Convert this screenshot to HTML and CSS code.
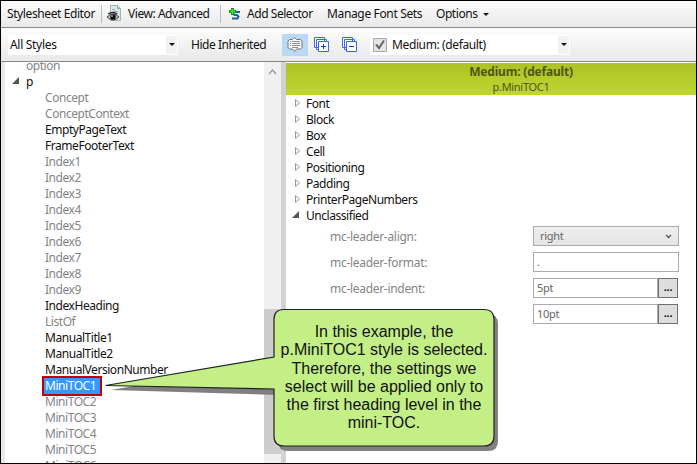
FILE: index.html
```html
<!DOCTYPE html>
<html lang="en">
<head>
<meta charset="utf-8">
<title>Stylesheet Editor</title>
<link rel="stylesheet" href="styles.css">
</head>
<body>
<div class="window">
  <header class="bar menu">
    <span class="title">Stylesheet Editor</span>
    <i class="sep"></i>
    <svg class="view-icon" width="16" height="18" viewBox="0 0 16 18"><path d="M3.500.500h7l3 3v12h-10z" fill="#dce9ea" stroke="#9db5b7"/><path d="M10.500.500v3h3M5 4.500h3M6 6.500h5M8 8.500h3" fill="none" stroke="#8fa9ab"/><path d="M0 12q6-6 12 0q-6 6-12 0" fill="#c9c9c2" stroke="#444"/><path d="M1 9q5-3 9 0" fill="none" stroke="#222" stroke-width="1.300"/><circle cx="6" cy="12" r="2.800" fill="#111"/><circle cx="5" cy="11" r=".8" fill="#fff"/></svg>
    <span class="view">View: Advanced</span>
    <i class="sep"></i>
    <svg class="add-icon" width="12" height="13" viewBox="0 0 12 13"><path d="M11 4H5.500L4.500 5.500l1 1.500H8l1.500 1.500L8.500 10.500H3" fill="none" stroke="#1668a0" stroke-width="2"/><path d="M3.500 0v7M0 3.500h7" stroke="#159718" stroke-width="3"/><path d="M3.500 1v5M1 3.500h5" stroke="#45df3c" stroke-width="1.500"/></svg>
    <span class="add">Add Selector</span>
    <span class="manage">Manage Font Sets</span>
    <span class="options">Options</span>
    <i class="arrow"></i>
  </header>
  <div class="bar tools">
    <div class="combo styles"><span class="all">All Styles</span><b class="drop"><i class="arrow"></i></b></div>
    <span class="hide">Hide Inherited</span>
    <div class="toggle"><svg width="16" height="16" viewBox="0 0 16 16"><path d="M2.500 2.500h3l2-2 2 2h4l1.500 1.500v6.500L13.500 12h-4l-2 2.500-2-2.500h-3L1 10.500V4z" fill="#f7f7f7" stroke="#777"/><path d="M3 4.500h1M5 4.500h8M3 6.500h1M5 6.500h8M3 8.500h1M5 8.500h8M5 10.500h6" stroke="#777" stroke-width=".8"/></svg></div>
    <svg class="expand" width="16" height="16" viewBox="0 0 16 16"><g fill="#fff" stroke="#3a68ea"><path d="M.5.500h10v10h-10zM2.500 2.500h10v10h-10z"/><path d="M4.500 4.500h10v10h-10z"/><path d="M7 9.500h5M9.500 7v5" stroke="#174695"/></g></svg>
    <svg class="collapse" width="16" height="16" viewBox="0 0 16 16"><g fill="#fff" stroke="#3a68ea"><path d="M.5.500h10v10h-10zM2.500 2.500h10v10h-10z"/><path d="M4.500 4.500h10v10h-10z"/><path d="M7 9.500h5" stroke="#174695"/></g></svg>
    <div class="combo medium"><svg width="14" height="14" viewBox="0 0 14 14"><path d="M.5.500h13v13H.5z" fill="#e5e5e5" stroke="#aaa"/><path d="M3 6.500l3 3.500 5-7.500" fill="none" stroke="#666" stroke-width="2"/></svg><span class="mdef">Medium: (default)</span><b class="drop"><i class="arrow"></i></b></div>
  </div>
  <main class="body">
    <div class="tree">
      <ul>
        <li class="parent gray">option</li>
        <li class="parent"><svg class="open" width="8" height="8" viewBox="0 0 8 8"><path d="M7 0v7H0z" fill="#555"/></svg>p</li>
        <li class="gray">Concept</li><li class="gray">ConceptContext</li>
        <li>EmptyPageText</li><li>FrameFooterText</li>
        <li class="gray">Index1</li><li class="gray">Index2</li><li class="gray">Index3</li><li class="gray">Index4</li><li class="gray">Index5</li><li class="gray">Index6</li><li class="gray">Index7</li><li class="gray">Index8</li><li class="gray">Index9</li>
        <li>IndexHeading</li><li class="gray">ListOf</li><li>ManualTitle1</li><li>ManualTitle2</li><li>ManualVersionNumber</li>
        <li class="picked"><span>MiniTOC1</span></li>
        <li class="gray">MiniTOC2</li><li class="gray">MiniTOC3</li><li class="gray">MiniTOC4</li><li class="gray">MiniTOC5</li><li class="gray">MiniTOC6</li>
      </ul>
    </div>
    <div class="scroll"><svg width="9" height="6" viewBox="0 0 9 6"><path d="M1 5l3.500-4L8 5" fill="none" stroke="#999" stroke-width="1.300"/></svg><i class="thumb"></i></div>
    <div class="split"></div>
    <section class="props">
      <div class="heading"><strong>Medium: (default)</strong><span>p.MiniTOC1</span></div>
      <ul class="groups">
        <li><svg width="6" height="8" viewBox="0 0 6 8"><path d="M.5.500v7L4.500 4z" fill="#fff" stroke="#999"/></svg>Font</li>
        <li><svg width="6" height="8" viewBox="0 0 6 8"><path d="M.5.500v7L4.500 4z" fill="#fff" stroke="#999"/></svg>Block</li>
        <li><svg width="6" height="8" viewBox="0 0 6 8"><path d="M.5.500v7L4.500 4z" fill="#fff" stroke="#999"/></svg>Box</li>
        <li><svg width="6" height="8" viewBox="0 0 6 8"><path d="M.5.500v7L4.500 4z" fill="#fff" stroke="#999"/></svg>Cell</li>
        <li><svg width="6" height="8" viewBox="0 0 6 8"><path d="M.5.500v7L4.500 4z" fill="#fff" stroke="#999"/></svg>Positioning</li>
        <li><svg width="6" height="8" viewBox="0 0 6 8"><path d="M.5.500v7L4.500 4z" fill="#fff" stroke="#999"/></svg>Padding</li>
        <li><svg width="6" height="8" viewBox="0 0 6 8"><path d="M.5.500v7L4.500 4z" fill="#fff" stroke="#999"/></svg>PrinterPageNumbers</li>
        <li><svg class="open" width="8" height="8" viewBox="0 0 8 8"><path d="M7 0v7H0z" fill="#555"/></svg>Unclassified</li>
      </ul>
      <div class="row"><label>mc-leader-align:</label><div class="field select"><span>right</span><svg width="7" height="5" viewBox="0 0 7 5"><path d="M1 1l2.500 2.500L6 1" fill="none" stroke="#555" stroke-width="1.300"/></svg></div></div>
      <div class="row"><label>mc-leader-format:</label><div class="field">.</div></div>
      <div class="row"><label>mc-leader-indent:</label><div class="field short">5pt</div><b class="more">...</b></div>
      <div class="row"><label></label><div class="field short">10pt</div><b class="more">...</b></div>
    </section>
  </main>
  <div class="callout">
    <svg width="394" height="145" viewBox="0 0 394 145"><path d="M6 82L173 53V16q0-10 10-10H383q10 0 10 10V133q0 10-10 10H183q-10 0-10-10V87z" fill="#808080"/><path d="M.500 77.500L169 49V11.500q0-10 10-10H379q10 0 10 10V128q0 10-10 10H179q-10 0-10-10V81z" fill="#c3ef86" stroke="#222" stroke-width="1.200"/></svg>
    <p><span>In this example, the</span><span>p.MiniTOC1 style is selected.</span><span>Therefore, the settings we</span><span>select will be applied only to</span><span>the first heading level in the</span><span>mini-TOC.</span></p>
  </div>
</div>
</body>
</html>
```
FILE: styles.css
```css
* { box-sizing: border-box; }
body { margin: 0; overflow: hidden; font: 12px/16px "Noto Sans", sans-serif; letter-spacing: -0.45px; color: #111; }
ul, p { margin: 0; padding: 0; list-style: none; }
span, label { white-space: nowrap; }
svg { display: block; flex: none; }
.window { position: relative; width: 697px; height: 464px; border: 1px solid #000; background: #fff; display: flex; flex-direction: column; overflow: hidden; }
.bar { display: flex; align-items: center; flex: none; background: linear-gradient(#fcfcfc, #e9e9e9); border-bottom: 1px solid #888; }
.bar > * { flex: none; }
.menu { height: 27px; padding-left: 6px; }
.title { width: 94px; letter-spacing: -.4px; }
.sep { width: 1px; height: 18px; background: #b4bdca; }
.view-icon { margin-left: 5px; }
.view { width: 92px; margin-left: 5px; }
.add-icon { margin-left: 8px; }
.add { width: 80px; margin-left: 6px; }
.manage { width: 109px; letter-spacing: -.35px; }
.options { width: 47px; }
.arrow { width: 0; height: 0; border: 3px solid transparent; border-top-color: #111; border-bottom: 0; }
.tools { height: 34px; padding-left: 7px; }
.combo { display: flex; align-items: center; height: 20px; background: #fff; }
.drop { display: flex; justify-content: center; align-items: center; width: 11px; height: 18px; margin: 0 1px 0 auto; background: #f2f2f2; }
.styles { width: 170px; padding-left: 2px; }
.all { letter-spacing: -.3px; }
.hide { width: 78px; margin-left: 13px; }
.toggle { display: flex; justify-content: center; align-items: center; width: 26px; height: 22px; margin-left: 13px; background: #b9d9f6; }
.expand { margin-left: 6px; }
.collapse { margin-left: 12px; }
.medium { width: 200px; margin-left: 12px; padding-left: 3px; }
.mdef { margin-left: 5px; letter-spacing: -.38px; }
.body { display: flex; flex: 1; min-height: 0; }
.tree { width: 263px; border-left: 4px solid #eee9e9; overflow: hidden; flex: none; }
.tree ul { margin-top: -4px; }
.tree li { height: 16px; padding-left: 40px; }
.tree .parent { display: flex; padding-left: 21px; }
.tree .parent svg { margin: 3px 8px 0 -15px; }
.tree .parent svg { margin-left: -14px; margin-right: 6px; }
.gray { color: #858585; }
.picked span { display: inline-block; margin-left: -1px; padding: 0 2px 0 1px; width: 56px; background: #3399ff; color: #fff; outline: 2px solid #c00000; height: 16px; }
.scroll { display: flex; flex-direction: column; align-items: center; justify-content: space-between; width: 17px; background: #f0f0f0; padding: 7px 0 9px; flex: none; }
.thumb { width: 17px; height: 145px; background: #cdcdcd; }
.split { width: 5px; background: #d2d2d2; flex: none; }
.props { flex: 1; min-width: 0; padding-top: 1px; }
.heading { display: flex; flex-direction: column; align-items: center; height: 32px; background: linear-gradient(#acc226, #bfd730); color: #4d5713; line-height: 15px; padding: 1px 0 0 60px; }
.heading strong { letter-spacing: -.2px; }
.heading span { font-size: 11px; letter-spacing: -.3px; }
.groups { padding-top: 1px; }
.groups li { display: flex; height: 16px; padding-left: 9px; }
.groups svg { margin: 3px 5px 0 0; }
.groups .open { margin-left: -3px; margin-right: 6px; }
.row { display: flex; align-items: center; height: 26px; padding-left: 44px; color: #858585; letter-spacing: -.3px; }
.groups + .row { margin-top: -1px; }
.row label { width: 203px; padding-top: 2px; }
.field { width: 146px; height: 20px; border: 1px solid #aaaab0; padding: 1px 3px; font-size: 11px; color: #666; }
.select { display: flex; align-items: center; justify-content: space-between; background: linear-gradient(#efefef, #e4e4e4); padding: 0 6px; }
.short { width: 125px; }
.more { width: 20px; height: 20px; border: 1px solid #707070; background: #ddd; color: #111; text-align: center; font-size: 11px; }
.callout { position: absolute; left: 104px; top: 307px; width: 394px; height: 145px; }
.callout p { position: absolute; left: 169px; top: 15px; width: 220px; font: 16px/18.300px "Liberation Sans", sans-serif; letter-spacing: 0; text-align: center; color: #111; }
.callout span { display: block; }
```
